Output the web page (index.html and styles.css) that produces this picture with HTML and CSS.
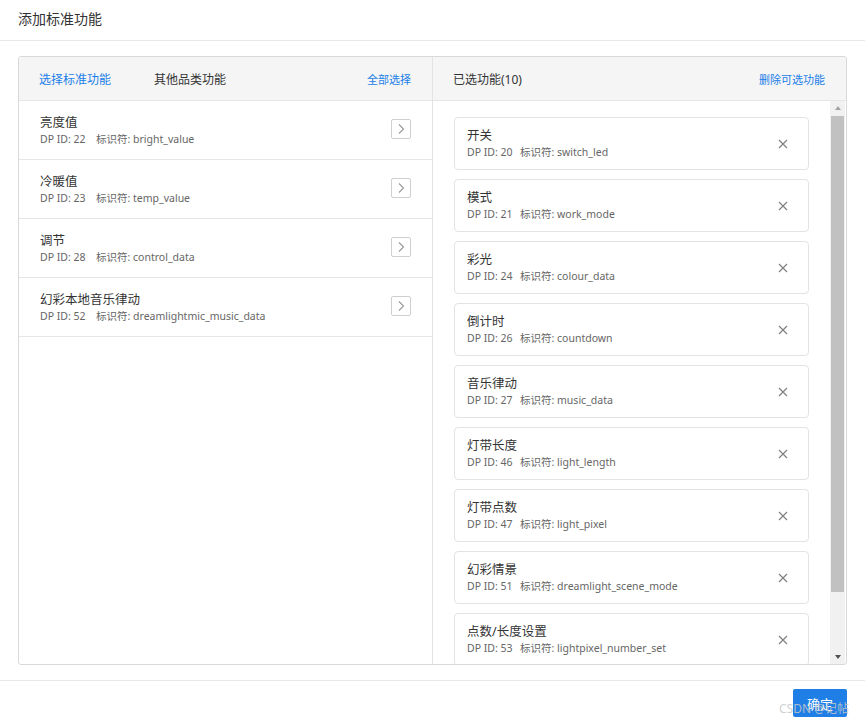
FILE: index.html
```html
<!DOCTYPE html>
<html lang="zh-CN">
<head>
<meta charset="utf-8">
<title>添加标准功能</title>
<link rel="stylesheet" href="styles.css">
</head>
<body>
<div class="dialog">
  <div class="dialog-title">添加标准功能</div>
  <div class="dialog-body">
    <div class="panel">
      <div class="col col-left">
        <div class="col-head">
          <div class="tabs">
            <span class="tab active">选择标准功能</span>
            <span class="tab">其他品类功能</span>
          </div>
          <a class="link">全部选择</a>
        </div>
        <div class="left-list">
          <div class="row">
            <div class="info"><div class="name">亮度值</div><div class="meta"><span class="dp">DP ID: 22</span><span>标识符: bright_value</span></div></div>
            <span class="add-btn"><svg width="10" height="12" viewBox="0 0 10 12"><path d="M3 1.5 L7.5 6 L3 10.5" fill="none" stroke="#999" stroke-width="1.1"/></svg></span>
          </div>
          <div class="row">
            <div class="info"><div class="name">冷暖值</div><div class="meta"><span class="dp">DP ID: 23</span><span>标识符: temp_value</span></div></div>
            <span class="add-btn"><svg width="10" height="12" viewBox="0 0 10 12"><path d="M3 1.5 L7.5 6 L3 10.5" fill="none" stroke="#999" stroke-width="1.1"/></svg></span>
          </div>
          <div class="row">
            <div class="info"><div class="name">调节</div><div class="meta"><span class="dp">DP ID: 28</span><span>标识符: control_data</span></div></div>
            <span class="add-btn"><svg width="10" height="12" viewBox="0 0 10 12"><path d="M3 1.5 L7.5 6 L3 10.5" fill="none" stroke="#999" stroke-width="1.1"/></svg></span>
          </div>
          <div class="row">
            <div class="info"><div class="name">幻彩本地音乐律动</div><div class="meta"><span class="dp">DP ID: 52</span><span>标识符: dreamlightmic_music_data</span></div></div>
            <span class="add-btn"><svg width="10" height="12" viewBox="0 0 10 12"><path d="M3 1.5 L7.5 6 L3 10.5" fill="none" stroke="#999" stroke-width="1.1"/></svg></span>
          </div>
        </div>
      </div>
      <div class="col col-right">
        <div class="col-head">
          <span class="head-title">已选功能(10)</span>
          <a class="link">删除可选功能</a>
        </div>
        <div class="right-body">
          <div class="cards">
            <div class="card"><div class="info"><div class="name">开关</div><div class="meta"><span class="dp2">DP ID: 20</span><span>标识符: switch_led</span></div></div><svg class="close" width="10" height="10" viewBox="0 0 10 10"><path d="M1 1 L9 9 M9 1 L1 9" stroke="#808080" stroke-width="1.2"/></svg></div>
            <div class="card"><div class="info"><div class="name">模式</div><div class="meta"><span class="dp2">DP ID: 21</span><span>标识符: work_mode</span></div></div><svg class="close" width="10" height="10" viewBox="0 0 10 10"><path d="M1 1 L9 9 M9 1 L1 9" stroke="#808080" stroke-width="1.2"/></svg></div>
            <div class="card"><div class="info"><div class="name">彩光</div><div class="meta"><span class="dp2">DP ID: 24</span><span>标识符: colour_data</span></div></div><svg class="close" width="10" height="10" viewBox="0 0 10 10"><path d="M1 1 L9 9 M9 1 L1 9" stroke="#808080" stroke-width="1.2"/></svg></div>
            <div class="card"><div class="info"><div class="name">倒计时</div><div class="meta"><span class="dp2">DP ID: 26</span><span>标识符: countdown</span></div></div><svg class="close" width="10" height="10" viewBox="0 0 10 10"><path d="M1 1 L9 9 M9 1 L1 9" stroke="#808080" stroke-width="1.2"/></svg></div>
            <div class="card"><div class="info"><div class="name">音乐律动</div><div class="meta"><span class="dp2">DP ID: 27</span><span>标识符: music_data</span></div></div><svg class="close" width="10" height="10" viewBox="0 0 10 10"><path d="M1 1 L9 9 M9 1 L1 9" stroke="#808080" stroke-width="1.2"/></svg></div>
            <div class="card"><div class="info"><div class="name">灯带长度</div><div class="meta"><span class="dp2">DP ID: 46</span><span>标识符: light_length</span></div></div><svg class="close" width="10" height="10" viewBox="0 0 10 10"><path d="M1 1 L9 9 M9 1 L1 9" stroke="#808080" stroke-width="1.2"/></svg></div>
            <div class="card"><div class="info"><div class="name">灯带点数</div><div class="meta"><span class="dp2">DP ID: 47</span><span>标识符: light_pixel</span></div></div><svg class="close" width="10" height="10" viewBox="0 0 10 10"><path d="M1 1 L9 9 M9 1 L1 9" stroke="#808080" stroke-width="1.2"/></svg></div>
            <div class="card"><div class="info"><div class="name">幻彩情景</div><div class="meta"><span class="dp2">DP ID: 51</span><span>标识符: dreamlight_scene_mode</span></div></div><svg class="close" width="10" height="10" viewBox="0 0 10 10"><path d="M1 1 L9 9 M9 1 L1 9" stroke="#808080" stroke-width="1.2"/></svg></div>
            <div class="card"><div class="info"><div class="name">点数/长度设置</div><div class="meta"><span class="dp2">DP ID: 53</span><span>标识符: lightpixel_number_set</span></div></div><svg class="close" width="10" height="10" viewBox="0 0 10 10"><path d="M1 1 L9 9 M9 1 L1 9" stroke="#808080" stroke-width="1.2"/></svg></div>
          </div>
          <div class="scrollbar">
            <span class="arrow up"></span>
            <div class="track"><div class="thumb"></div></div>
            <span class="arrow down"></span>
          </div>
        </div>
      </div>
    </div>
  </div>
  <div class="dialog-footer">
    <button class="ok">确定</button>
    <span class="watermark">CSDN @记帖</span>
  </div>
</div>
</body>
</html>
```
FILE: styles.css
```css
* { box-sizing: border-box; }
html, body { margin: 0; padding: 0; background: #fff; }
body {
  font-family: "Noto Sans", "Noto Sans CJK SC", sans-serif;
  color: #333;
  width: 865px;
  height: 725px;
  overflow: hidden;
}
.dialog { display: flex; flex-direction: column; height: 725px; }
.dialog-title {
  height: 41px;
  padding: 0 18px;
  line-height: 38px;
  font-size: 14px;
  color: #333;
  border-bottom: 1px solid #e8e8e8;
}
.dialog-body { padding: 15px 18px 0; }
.panel {
  display: flex;
  height: 609px;
  border: 1px solid #d9d9d9;
  border-radius: 3px;
  overflow: hidden;
}
.col { display: flex; flex-direction: column; }
.col-left { width: 414px; border-right: 1px solid #e3e3e3; }
.col-right { flex: 1; min-width: 0; }
.col-head {
  height: 44px;
  flex: none;
  background: #f5f5f5;
  border-bottom: 1px solid #e6e6e6;
  display: flex;
  align-items: center;
  justify-content: space-between;
  font-size: 12px;
}
.col-left .col-head { padding: 0 21px 0 20px; }
.col-right .col-head { padding: 0 21px 0 20px; }
.tabs { display: flex; gap: 43px; }
.tab { color: #333; font-size: 12px; }
.tab.active { color: #1a7ee8; }
.head-title { font-size: 12px; color: #333; }
.link { color: #1a7ee8; font-size: 11px; cursor: pointer; }

.left-list { flex: 1; }
.row {
  height: 59px;
  border-bottom: 1px solid #e6e6e6;
  display: flex;
  align-items: center;
  justify-content: space-between;
  padding: 0 21px 0 21px;
}
.row .info { margin-top: 1px; }
.row .add-btn { margin-top: -3px; }
.info { display: flex; flex-direction: column; }
.name { font-size: 12.5px; color: #333; line-height: 17px; }
.meta { font-size: 10.5px; color: #666; line-height: 16px; margin-top: 0; }
.dp { display: inline-block; width: 56px; }
.dp2 { display: inline-block; width: 53px; }
.add-btn {
  width: 20px;
  height: 20px;
  border: 1px solid #cfcfcf;
  border-radius: 2px;
  display: flex;
  align-items: center;
  justify-content: center;
  background: #fff;
}

.right-body { flex: 1; display: flex; min-height: 0; }
.cards {
  flex: 1;
  overflow: hidden;
  padding: 16px 21px 0 21px;
  display: flex;
  flex-direction: column;
  gap: 9px;
}
.card {
  flex: none;
  height: 53px;
  border: 1px solid #e3e3e3;
  border-radius: 4px;
  display: flex;
  align-items: center;
  justify-content: space-between;
  padding: 0 20px 0 12px;
}
.card .info { margin-top: -1px; }
.close { flex: none; }

.scrollbar {
  width: 15px;
  flex: none;
  background: #f1f1f1;
  display: flex;
  flex-direction: column;
  align-items: center;
  margin-right: 1px;
}
.arrow { width: 0; height: 0; border-left: 3.5px solid transparent; border-right: 3.5px solid transparent; flex: none; }
.arrow.up { border-bottom: 4px solid #a3a3a3; margin: 5px 0 6px; }
.arrow.down { border-top: 4px solid #505050; margin: 6px 0 5px; }
.track { flex: 1; width: 100%; padding: 0 1px; }
.thumb { width: 100%; height: 476px; background: #c1c1c1; }

.dialog-footer {
  margin-top: 15px;
  border-top: 1px solid #e8e8e8;
  height: 45px;
  display: flex;
  justify-content: flex-end;
  align-items: flex-start;
  padding: 8px 18px 0;
  position: relative;
}
.ok {
  width: 54px;
  height: 28px;
  border: none;
  border-radius: 2px;
  background: #1f7fe6;
  color: #fff;
  font-size: 13px;
  font-family: "Noto Sans CJK SC", sans-serif;
}
.watermark {
  position: absolute;
  right: 16px;
  top: 18px;
  font-size: 12px;
  color: rgba(200, 200, 200, 0.85);
  font-family: "Noto Sans", "Noto Sans CJK SC", sans-serif;
}
```
